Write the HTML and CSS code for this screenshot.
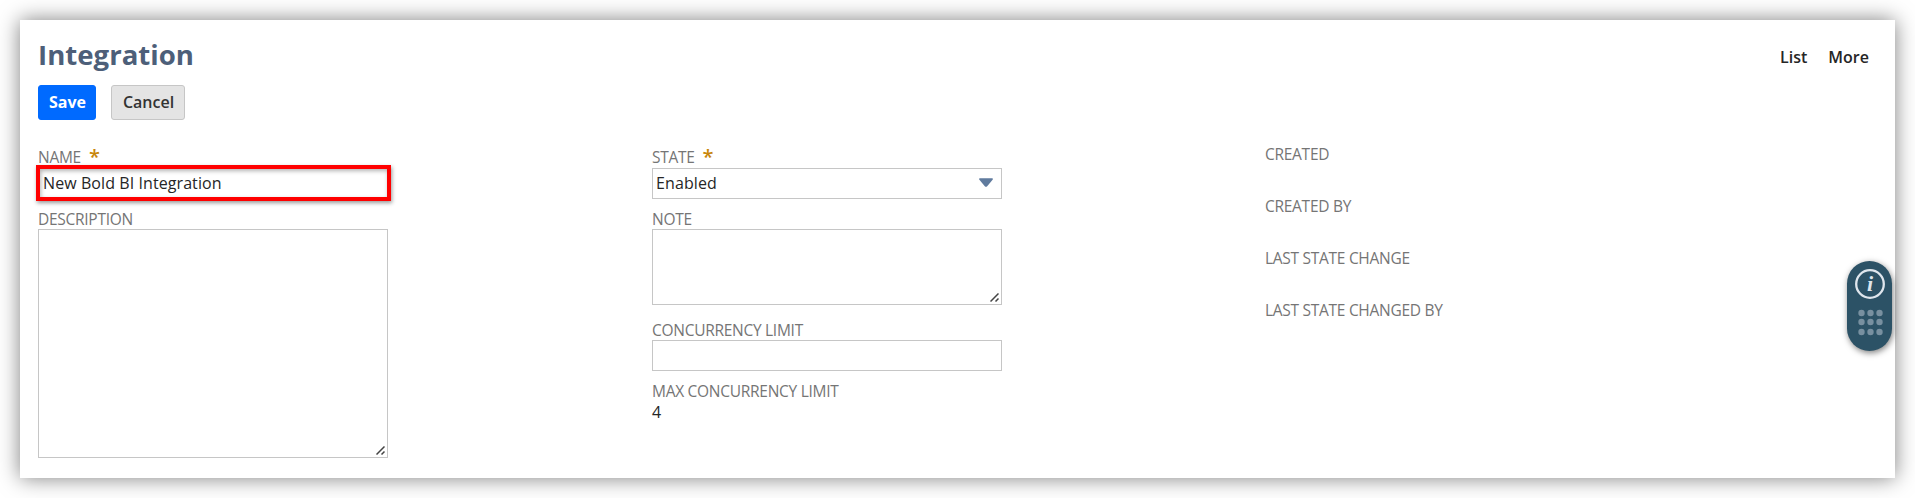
FILE: index.html
```
<!DOCTYPE html>
<html lang="en">
<head>
<meta charset="utf-8">
<title>Integration</title>
<link rel="stylesheet" href="styles.css">
</head>
<body>
<main class="card">
  <header class="header">
    <h1 class="title">Integration</h1>
    <nav class="links"><a class="link">List</a><a class="link">More</a></nav>
  </header>
  <div class="actions">
    <button class="btn btn-primary">Save</button>
    <button class="btn btn-default">Cancel</button>
  </div>
  <div class="form">
    <section class="column">
      <div class="field">
        <div class="label label-required">NAME<span class="star">*</span></div>
        <div class="control control-name">New Bold BI Integration<span class="highlight"></span></div>
      </div>
      <div class="field">
        <div class="label">DESCRIPTION</div>
        <div class="control area area-tall"><svg class="grip" width="9" height="9" viewBox="0 0 9 9"><path d="M.5 8.5l8-8M5.5 8.5l3-3"/></svg></div>
      </div>
    </section>
    <section class="column">
      <div class="field">
        <div class="label label-required">STATE<span class="star">*</span></div>
        <div class="control select">Enabled<svg class="arrow" width="14" height="9" viewBox="0 0 14 9"><path d="M1 .3h12q1.5 0 .6 1.4L8.2 8.2q-1.2 1-2.4 0L.4 1.7Q-.5.3 1 .3z"/></svg></div>
      </div>
      <div class="field field-note">
        <div class="label">NOTE</div>
        <div class="control area area-short"><svg class="grip" width="9" height="9" viewBox="0 0 9 9"><path d="M.5 8.5l8-8M5.5 8.5l3-3"/></svg></div>
      </div>
      <div class="field">
        <div class="label">CONCURRENCY LIMIT</div>
        <div class="control"></div>
      </div>
      <div class="field">
        <div class="label">MAX CONCURRENCY LIMIT</div>
        <div class="value">4</div>
      </div>
    </section>
    <section class="column column-meta">
      <div class="label">CREATED</div>
      <div class="label">CREATED BY</div>
      <div class="label">LAST STATE CHANGE</div>
      <div class="label">LAST STATE CHANGED BY</div>
    </section>
  </div>
  <aside class="help">
    <svg width="45" height="90" viewBox="0 0 45 90">
      <circle class="ring" cx="23" cy="23" r="13.8"/>
      <text class="info" x="23" y="30" text-anchor="middle">i</text>
      <g class="dots">
        <circle cx="14.5" cy="52" r="3.2"/><circle cx="23.5" cy="52" r="3.2"/><circle cx="32.5" cy="52" r="3.2"/>
        <circle cx="14.5" cy="61" r="3.2"/><circle cx="23.5" cy="61" r="3.2"/><circle cx="32.5" cy="61" r="3.2"/>
        <circle cx="14.5" cy="71" r="3.2"/><circle cx="23.5" cy="71" r="3.2"/><circle cx="32.5" cy="71" r="3.2"/>
      </g>
    </svg>
  </aside>
</main>
</body>
</html>
```
FILE: styles.css
```
* { box-sizing: border-box; }
body {
  margin: 0;
  padding: 20px;
  height: 498px;
  overflow: hidden;
  background: #fff;
  color: #262626;
  font: 16px/22px "Open Sans", sans-serif;
}
.card {
  position: relative;
  height: 458px;
  padding: 16px 26px 0 18px;
  background: #fff;
  box-shadow: 0 0 20px rgba(0, 0, 0, .5);
}
.header {
  display: flex;
  justify-content: space-between;
  height: 49px;
}
.title {
  margin: 0;
  color: #4d5f79;
  font-size: 27.6px;
  line-height: 36px;
  font-weight: 700;
}
.links { display: flex; gap: 21px; padding-top: 10px; }
.link { font-weight: 600; }
.actions { display: flex; gap: 15px; height: 35px; }
.btn {
  height: 35px;
  padding: 0 9px 2px 10px;
  border: 1px solid #c6c6c6;
  border-radius: 3px;
  font: 600 16px/22px "Open Sans", sans-serif;
}
.btn-primary { width: 58px; background: #006aff; border-color: #006aff; color: #fff; font-weight: 700; }
.btn-default { width: 74px; background: #e4e4e4; color: #333; }
.form {
  display: grid;
  grid-template-columns: 614px 613px 1fr;
  padding-top: 24px;
}
.column { width: 350px; padding-top: 3px; }
.column-meta { padding-top: 0; display: flex; flex-direction: column; gap: 32px; }
.field { margin-bottom: 10px; }
.field-note { margin-bottom: 15px; }
.label { height: 20px; color: #757575; font-size: 15.5px; letter-spacing: -.28px; line-height: 20px; white-space: nowrap; }
.label-required { height: 21px; display: flex; gap: 8px; }
.star { color: #c8860b; font-size: 20px; line-height: 19px; font-weight: 600; }
.control {
  position: relative;
  height: 31px;
  padding: 3px 4px;
  border: 1px solid #c6c6c6;
}
.control-name { letter-spacing: .08px; }
.select { display: flex; justify-content: space-between; align-items: center; padding: 0 8px 2px 3px; letter-spacing: .1px; }
.arrow { fill: #607b9e; }
.area { display: flex; justify-content: flex-end; align-items: flex-end; padding: 2px; }
.area-tall { height: 229px; }
.area-short { height: 76px; }
.grip { fill: none; stroke: #444; stroke-width: 1.5; }
.highlight {
  position: absolute;
  inset: -4px -4px -3px -3px;
  border: 4px solid #f00;
  box-shadow: 1px 2px 4px rgba(0, 0, 0, .4), inset 1px 2px 4px rgba(0, 0, 0, .3);
}
.help {
  position: absolute;
  left: 1827px;
  top: 241px;
  width: 45px;
  height: 90px;
  border-radius: 23px;
  background: #2c5266;
  box-shadow: 1px 2px 6px rgba(0, 0, 0, .5);
}
.ring { fill: none; stroke: #dfe6ed; stroke-width: 2.3; }
.info { fill: #dfe6ed; font: italic 700 22px "Liberation Serif", serif; }
.dots { fill: #7890a0; }
```
